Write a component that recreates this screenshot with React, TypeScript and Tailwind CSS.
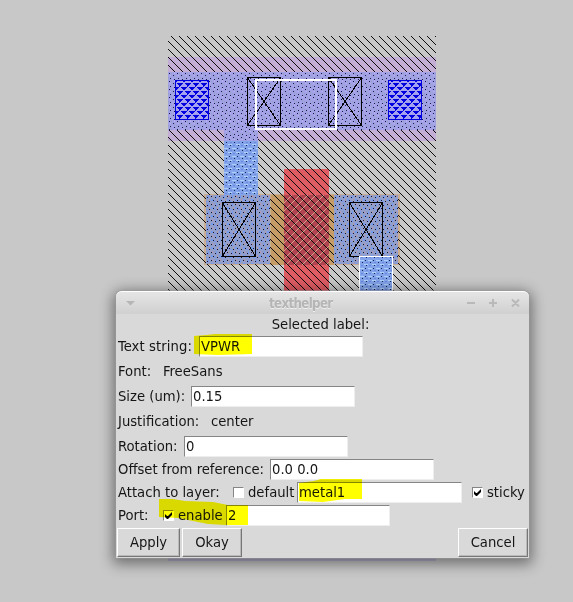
import React from 'react';

const Entry = ({ value, className = '' }: { value: string; className?: string }) => (
  <span className={`mt-[1px] flex h-[21px] w-[164px] shrink-0 items-center border border-t-[#858585] border-l-[#858585] border-r-[#eeeeee] border-b-[#eeeeee] bg-white pb-[1px] pl-[1px] ${className}`}>
    {value}
  </span>
);

const Check = ({ on = false }: { on?: boolean }) => (
  <span className="relative mt-[1px] block size-[11px] shrink-0 border border-t-[#858585] border-l-[#858585] border-r-white border-b-white bg-white">
    {on && (
      <svg className="absolute top-0 left-0" width="9" height="9" viewBox="0 0 9 9">
        <path d="M1 3v3l2 2h1l4-4V1L4 5H3z" fill="#000" />
      </svg>
    )}
  </span>
);

const Button = ({ label, className }: { label: string; className: string }) => (
  <button className={`h-[29px] border border-t-white border-l-white border-r-[#777] border-b-[#777] bg-[#d9d9d9] pb-[1px] text-center shadow-[inset_-1px_-1px_#b9b9b9] ${className}`}>
    {label}
  </button>
);

const Contact = ({ x, y, w, h }: { x: number; y: number; w: number; h: number }) => (
  <g fill="none" stroke="#000">
    <rect x={x + 0.5} y={y + 0.5} width={w} height={h} />
    <path d={`M${x} ${y}l${w + 1} ${h + 1}M${x + w + 1} ${y}l-${w + 1} ${h + 1}`} />
  </g>
);

const Layout = () => (
  <svg className="absolute inset-0" width="573" height="602" viewBox="0 0 573 602" shapeRendering="crispEdges">
    <defs>
      <pattern id="hatch" x="168" y="36" width="8" height="8" patternUnits="userSpaceOnUse">
        {[0, 1, 2, 3, 4, 5, 6, 7].map((i) => (
          <rect key={i} x={(i + 3) % 8} y={i} width="1" height="1" fill="#0c0c0c" />
        ))}
      </pattern>
      <pattern id="back" x="284" y="195" width="8" height="8" patternUnits="userSpaceOnUse">
        {[0, 1, 2, 3, 4, 5, 6, 7].map((i) => (
          <rect key={i} x={7 - i} y={i} width="1" height="1" fill="#d4a08a" />
        ))}
      </pattern>
      <pattern id="dots" x="168" y="72" width="8" height="8" patternUnits="userSpaceOnUse">
        <path d="M1 1h1v1h-1zM5 3h1v1h-1zM2 6h1v1h-1zM6 7h1v1h-1z" fill="#151b48" />
        <path d="M3 1h1v2h-1zM0 5h1v2h-1zM6 4h1v2h-1z" fill="#98a4cc" />
        <path d="M1 3h2v1h-2zM4 6h1v1h-1zM6 0h1v2h-1z" fill="#b7aaf5" />
      </pattern>
      <pattern id="li" x="224" y="139" width="8" height="8" patternUnits="userSpaceOnUse">
        <rect width="8" height="8" fill="#83a4ea" />
        <path d="M0 1h4v1h-4zM4 5h4v1h-4z" fill="#afd0fa" />
        <path d="M5 1h1v1h-1zM2 3h1v1h-1zM6 6h1v1h-1z" fill="#142451" />
        <path d="M1 6h2v1h-2zM6 3h2v1h-2z" fill="#6b89dd" />
      </pattern>
      <pattern id="diff" x="206" y="195" width="8" height="8" patternUnits="userSpaceOnUse">
        <rect width="8" height="8" fill="#929fca" />
        <path d="M2 0h1v3h-1zM5 4h2v2h-2zM0 6h2v1h-2z" fill="#759bf0" />
        <path d="M3 4h1v2h-1zM6 0h1v2h-1z" fill="#b29aaa" />
        <path d="M1 2h1v1h-1zM5 1h1v1h-1zM3 6h1v1h-1zM7 5h1v1h-1z" fill="#101535" />
      </pattern>
      <pattern id="via" x="175" y="82" width="8" height="8" patternUnits="userSpaceOnUse">
        <path d="M2 1h6v1h-6zM3 2h4v1h-4zM4 3h2v1h-2zM0 5h4v1h-4zM6 5h2v1h-2zM0 6h3v1h-3zM7 6h1v1h-1zM0 7h2v1h-2zM4 4h1v1h-1z" fill="#0000df" />
      </pattern>
    </defs>
    <rect x="168" y="57" width="268" height="84" fill="#c5aed5" />
    <rect x="204" y="194" width="196" height="71" fill="#c9ad91" />
    <rect x="271" y="195" width="63" height="70" fill="#c59c65" />
    <rect x="284" y="169" width="45" height="130" fill="#df5c63" />
    <rect x="284" y="195" width="45" height="70" fill="#b04450" />
    <rect x="284" y="195" width="45" height="70" fill="url(#back)" />
    <rect x="168" y="36" width="268" height="264" fill="url(#hatch)" />
    <rect x="168" y="72" width="268" height="58" fill="#a3a1e5" />
    <rect x="168" y="72" width="268" height="58" fill="url(#dots)" />
    <rect x="224" y="130" width="34" height="11" fill="#a3a1e5" />
    <rect x="224" y="130" width="34" height="11" fill="url(#dots)" />
    <rect x="224" y="141" width="34" height="54" fill="url(#li)" />
    <rect x="206" y="195" width="64" height="69" fill="url(#diff)" />
    <rect x="334" y="195" width="64" height="69" fill="url(#diff)" />
    {[175, 388].map((x) => (
      <g key={x}>
        <rect x={x} y="80" width="34" height="40" fill="#a3a1f0" />
        <rect x={x} y="80" width="34" height="40" fill="url(#via)" />
        <rect x={x + 0.5} y="80.5" width="33" height="39" fill="none" stroke="#0000df" />
      </g>
    ))}
    <Contact x={247} y={77} w={33} h={48} />
    <Contact x={328} y={77} w={33} h={48} />
    <Contact x={222} y={202} w={33} h={54} />
    <Contact x={349} y={202} w={33} h={54} />
    <rect x="256" y="80" width="80" height="49" fill="none" stroke="#fff" strokeWidth="2" />
    <rect x="359.5" y="256.5" width="33" height="50" fill="url(#li)" stroke="#fff" />
    <rect x="168" y="557" width="268" height="4" fill="#b4b2cc" />
  </svg>
);

export default function App() {
  return (
    <main className="relative h-[602px] w-[573px] overflow-hidden bg-[#c8c8c8] pt-[291px] pl-[116px] font-['DejaVu_Sans_Condensed','DejaVu_Sans',sans-serif] text-[14.67px] leading-[16px] text-[#151515] [font-stretch:condensed]">
      <Layout />
      <section className="relative flex h-[267px] w-[413px] flex-col rounded-t-[6px] bg-[#d9d9d9] shadow-[0_0_0_1px_#99999980,0_3px_14px_3px_rgba(0,0,0,0.45)]">
        <header className="flex h-[23px] shrink-0 items-center rounded-t-[6px] border-t border-white bg-gradient-to-b from-[#e5e5e5] to-[#d0d0d0] pr-[9px] pl-[10px] text-[#b5b5b5]">
          <svg width="9" height="6" viewBox="0 0 9 6"><path d="M0 1h9L4.5 5.5z" fill="#b6b6b6" /></svg>
          <h1 className="mt-[1px] ml-[134px] text-[13.2px] font-bold tracking-[-0.65px] [text-shadow:0_1px_#eee]">texthelper</h1>
          <svg className="ml-auto" width="54" height="11" viewBox="0 0 54 11" fill="none" stroke="#b9b9b9" strokeWidth="2">
            <path d="M1 5h8M23 5h8M27 1v8M46 1.5l7 7M53 1.5l-7 7" />
          </svg>
        </header>
        <div className="flex h-[20px] shrink-0 items-center justify-center pr-[4px]">Selected label:</div>
        <div className="flex h-[25px] shrink-0 items-center pb-[1px] pl-[2px]"><span className="w-[81px] tracking-[0.1px]">Text string:</span><Entry value="VPWR" /></div>
        <div className="flex h-[25px] shrink-0 items-center pb-[1px] pl-[2px]"><span className="w-[45px]">Font:</span>FreeSans</div>
        <div className="flex h-[25px] shrink-0 items-center pb-[1px] pl-[2px]"><span className="w-[73px]">Size (um):</span><Entry value="0.15" /></div>
        <div className="flex h-[25px] shrink-0 items-center pb-[1px] pl-[2px]"><span className="w-[93px]">Justification:</span>center</div>
        <div className="flex h-[25px] shrink-0 items-center pb-[1px] pl-[2px]"><span className="w-[66px]">Rotation:</span><Entry value="0" /></div>
        <div className="flex h-[21px] shrink-0 items-center pb-[1px] pl-[2px]"><span className="w-[152px]">Offset from reference:</span><Entry value="0.0 0.0" /></div>
        <div className="mt-[1px] flex h-[23px] shrink-0 items-center pb-[1px] pl-[2px]">
          <span className="w-[115px]">Attach to layer:</span><Check />
          <span className="w-[53px] pl-[4px]">default</span><Entry value="metal1" className="w-[165px]" />
          <span className="ml-[10px]"><Check on /></span><span className="ml-[4px]">sticky</span>
        </div>
        <div className="flex h-[23px] shrink-0 items-center pb-[1px] pl-[2px]">
          <span className="w-[45px]">Port:</span><Check on />
          <span className="w-[52px] pl-[4px]">enable</span><Entry value="2" />
        </div>
        <footer className="mt-[1px] flex h-[29px] shrink-0 pr-[1px] pl-[1px]">
          <Button label="Apply" className="w-[63px]" />
          <Button label="Okay" className="ml-[2px] w-[60px]" />
          <Button label="Cancel" className="ml-auto w-[70px]" />
        </footer>
        <svg className="pointer-events-none absolute inset-0 mix-blend-multiply" width="413" height="267" viewBox="0 0 413 267" fill="#ffff00">
          <path d="M78 45l12-1 9-1 37 0v20l-34 1-24-1z" />
          <path d="M183 192l15-2 7-2h41v20h-17l-22 3-24-1z" />
          <path d="M43 208h14l12 2 28 1 15 3h20v20h-22l-18-1-30-6-19-1z" />
        </svg>
      </section>
    </main>
  );
}
